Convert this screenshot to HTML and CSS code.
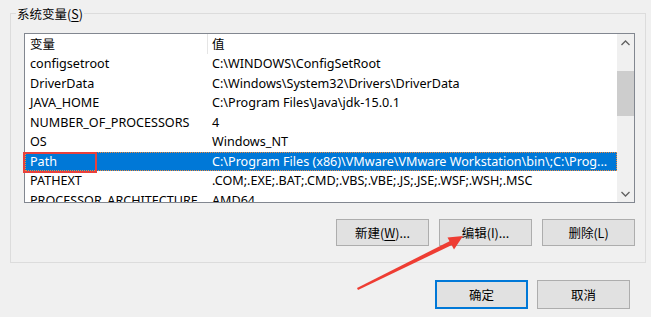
FILE: index.html
```
<!DOCTYPE html>
<html lang="zh-CN">
<head>
<meta charset="utf-8">
<title>系统变量</title>
<link rel="stylesheet" href="styles.css">
</head>
<body>
<div class="dialog">
  <div class="group">
    <div class="legend">系统变量(<u>S</u>)</div>
    <div class="list">
      <div class="rows">
        <div class="row head"><div class="c1">变量</div><div class="c2">值</div></div>
        <div class="row"><div class="c1">configsetroot</div><div class="c2">C:\WINDOWS\ConfigSetRoot</div></div>
        <div class="row"><div class="c1">DriverData</div><div class="c2">C:\Windows\System32\Drivers\DriverData</div></div>
        <div class="row"><div class="c1">JAVA_HOME</div><div class="c2">C:\Program Files\Java\jdk-15.0.1</div></div>
        <div class="row"><div class="c1">NUMBER_OF_PROCESSORS</div><div class="c2">4</div></div>
        <div class="row"><div class="c1">OS</div><div class="c2">Windows_NT</div></div>
        <div class="row selected"><div class="c1">Path</div><div class="c2">C:\Program Files (x86)\VMware\VMware Workstation\bin\;C:\Prog...</div></div>
        <div class="row"><div class="c1">PATHEXT</div><div class="c2">.COM;.EXE;.BAT;.CMD;.VBS;.VBE;.JS;.JSE;.WSF;.WSH;.MSC</div></div>
        <div class="row"><div class="c1">PROCESSOR_ARCHITECTURE</div><div class="c2">AMD64</div></div>
      </div>
      <div class="scrollbar">
        <div class="sb-btn"><svg width="9" height="6" viewBox="0 0 9 6"><polyline points="0.5,5 4.5,1 8.5,5" fill="none" stroke="#606060" stroke-width="1.3"/></svg></div>
        <div class="track"><div class="thumb"></div></div>
        <div class="sb-btn"><svg width="9" height="6" viewBox="0 0 9 6"><polyline points="0.5,1 4.5,5 8.5,1" fill="none" stroke="#606060" stroke-width="1.3"/></svg></div>
      </div>
    </div>
    <div class="btns">
      <button class="btn">新建(<u>W</u>)...</button>
      <button class="btn">编辑(I)...</button>
      <button class="btn">删除(L)</button>
    </div>
  </div>
  <div class="footer">
    <button class="btn big default">确定</button>
    <button class="btn big">取消</button>
  </div>
  <svg class="annot" width="651" height="317" viewBox="0 0 651 317">
    <rect x="24" y="153" width="72" height="19" fill="none" stroke="#e8413c" stroke-width="2"/>
    <polygon points="358,290 357,288 452,240 454,244" fill="#ee3d33"/>
    <polygon points="463,236 447.5,237.5 454,249.5" fill="#ee3d33"/>
  </svg>
</div>
</body>
</html>
```
FILE: styles.css
```
* { box-sizing: border-box; }
html, body { margin: 0; padding: 0; }
body {
  background: #f0f0f0;
  font-family: "Noto Sans", "Noto Sans CJK SC", sans-serif;
  font-size: 12px;
  color: #000;
  width: 651px;
  height: 317px;
  overflow: hidden;
}
.dialog { position: relative; width: 651px; height: 317px; padding-top: 13px; }
.group {
  margin: 0 5px 0 10px;
  border: 1px solid #dcdcdc;
  padding: 0 10px 16px 13px;
}
.legend {
  width: fit-content;
  margin: -10px 0 0 -8px;
  padding: 0 1px;
  height: 20px;
  line-height: 20px;
  background: #f0f0f0;
  font-family: "Noto Sans CJK SC", "Noto Sans", sans-serif;
  font-size: 12.5px;
}
.legend u, .btn u { text-underline-offset: 2px; }
.list {
  margin-top: 9px;
  height: 170px;
  border: 1px solid #828790;
  background: #fff;
  display: flex;
}
.rows { flex: 1; overflow: hidden; }
.row { display: flex; height: 19.5px; line-height: 20px; white-space: nowrap; font-size: 12.6px; }
.row.head { height: 20px; line-height: 20px; font-family: "Noto Sans CJK SC", "Noto Sans", sans-serif; font-size: 12.5px; }
.c1 { width: 183px; flex: none; padding-left: 5px; overflow: hidden; }
.head .c1 { border-right: 1px solid #e5e5e5; }
.c2 { flex: 1; min-width: 0; padding-left: 4px; padding-right: 4px; overflow: hidden; }
.row.selected { background: #0078d7; color: #fff; outline: 1px dotted #f08a3a; outline-offset: -1px; }
.scrollbar { width: 17px; flex: none; display: flex; flex-direction: column; background: #f0f0f0; }
.sb-btn { height: 17px; display: flex; align-items: center; justify-content: center; }
.track { flex: 1; padding-top: 20px; }
.thumb { height: 45px; background: #cdcdcd; }
.btns { margin-top: 16px; display: flex; justify-content: flex-end; gap: 10px; }
.btn {
  width: 93px;
  height: 27px;
  border: 1px solid #adadad;
  background: #e1e1e1;
  font-family: "Noto Sans CJK SC", "Noto Sans", sans-serif;
  font-size: 12.5px;
  color: #000;
  padding: 0;
  margin: 0;
}
.footer { margin-top: 17px; padding-right: 21px; display: flex; justify-content: flex-end; gap: 9px; }
.btn.big { height: 29px; }
.btn.default { border-color: #0078d7; box-shadow: inset 0 0 0 1px #0078d7; }
.annot { position: absolute; left: 0; top: 0; pointer-events: none; }
```
